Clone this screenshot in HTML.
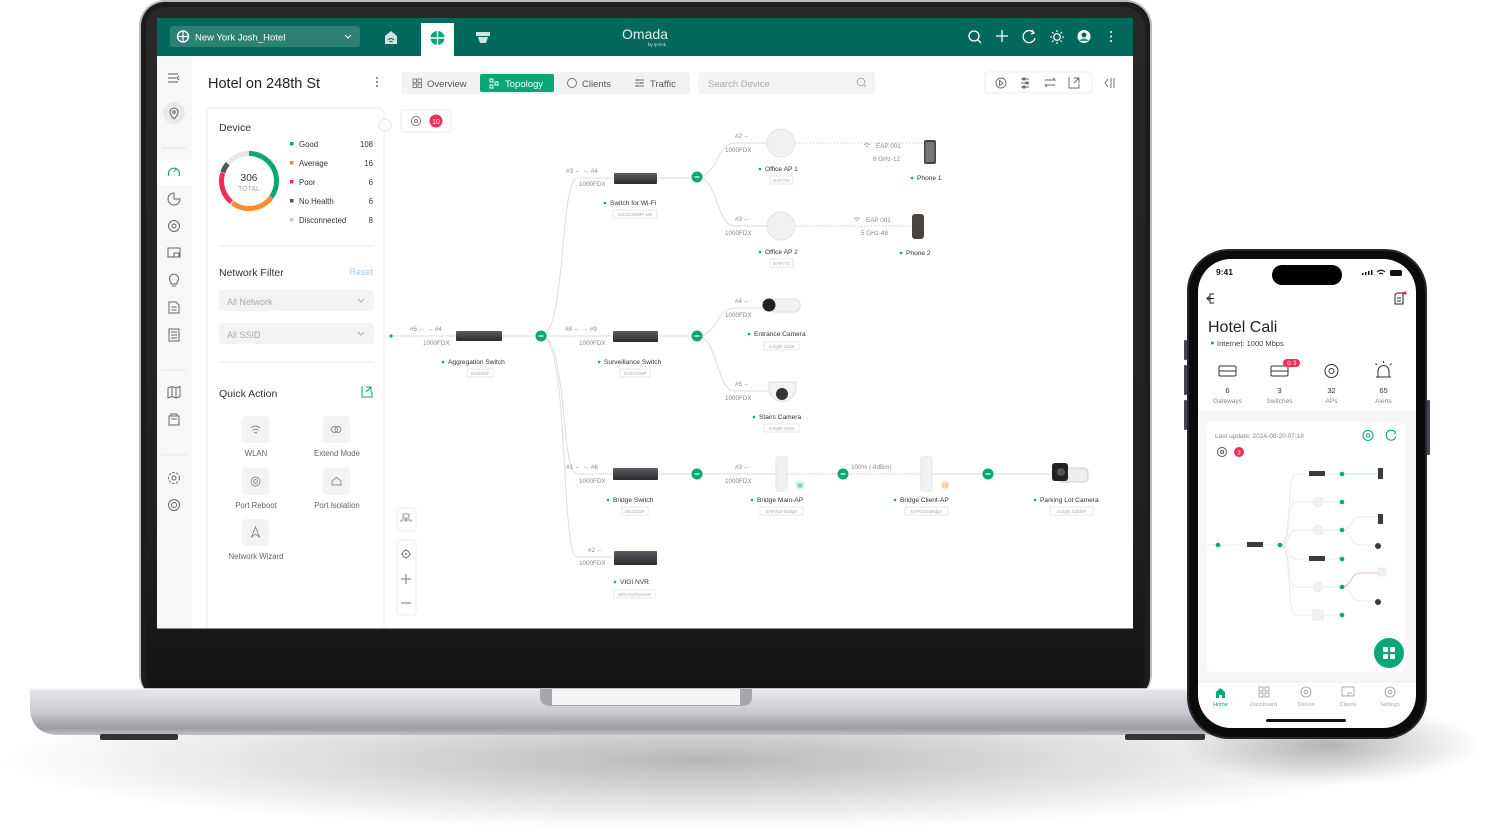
<!DOCTYPE html>
<html><head><meta charset="utf-8">
<style>
html,body{margin:0;padding:0;background:#fff;width:1487px;height:837px;overflow:hidden}
svg{display:block}
text{font-family:"Liberation Sans",sans-serif}
</style></head><body>
<svg width="1487" height="837" viewBox="0 0 1487 837" xmlns="http://www.w3.org/2000/svg">
<defs>
<radialGradient id="shd" cx="50%" cy="50%" r="50%"><stop offset="0" stop-color="#000" stop-opacity=".28"/><stop offset="1" stop-color="#000" stop-opacity="0"/></radialGradient>
<linearGradient id="base" x1="0" y1="0" x2="0" y2="1"><stop offset="0" stop-color="#e6e7e9"/><stop offset=".5" stop-color="#c9cbce"/><stop offset=".85" stop-color="#9a9c9f"/><stop offset="1" stop-color="#c0c2c5"/></linearGradient>
<linearGradient id="chin" x1="0" y1="0" x2="0" y2="1"><stop offset="0" stop-color="#282828"/><stop offset=".7" stop-color="#222"/><stop offset="1" stop-color="#141414"/></linearGradient>
<linearGradient id="sw" x1="0" y1="0" x2="0" y2="1"><stop offset="0" stop-color="#5a5d61"/><stop offset="1" stop-color="#2a2c2e"/></linearGradient>
<clipPath id="scr"><rect x="157" y="18" width="976" height="610"/></clipPath>
</defs>
<!-- shadow -->
<ellipse cx="700" cy="760" rx="700" ry="70" fill="url(#shd)"/>
<ellipse cx="1330" cy="745" rx="150" ry="40" fill="url(#shd)"/>
<!-- laptop lid -->
<rect x="139" y="0" width="1013" height="700" rx="26" fill="#b9bbbe"/>
<rect x="141" y="2" width="1009" height="698" rx="24" fill="#1c1c1c"/>
<rect x="146" y="7" width="999" height="690" rx="20" fill="url(#chin)"/>
<!-- screen -->
<rect x="157" y="18" width="976" height="611" fill="#8a8a8a"/>
<rect x="157" y="18" width="976" height="610" fill="#fff"/>
<rect x="157" y="18" width="976" height="38" fill="#04695c"/>
<!-- header -->
<rect x="170" y="26" width="190" height="21" rx="3" fill="#2d8074"/>
<circle cx="183" cy="36.5" r="5.5" fill="none" stroke="#fff" stroke-width="1.4"/><path d="M177.5 36.5h11M183 31v11" stroke="#fff" stroke-width="1.2"/>
<text x="195" y="40.5" font-size="9.5" fill="#fff">New York Josh_Hotel</text>
<path d="M345 35l3 3 3-3" fill="none" stroke="#fff" stroke-width="1.1"/>
<path d="M385 36l6-5 6 5v8h-12z" fill="#cfe3df"/><path d="M388 40q3-3 6 0M389.5 42q1.5-1.5 3 0" stroke="#04695c" fill="none" stroke-width="1"/>
<path d="M421 23h33v33h-33z" fill="#fff"/>
<circle cx="437.5" cy="38" r="7" fill="#07a776"/><path d="M430.5 38h14M437.5 31v14" stroke="#fff" stroke-width="1.4"/>
<path d="M476 32h14v4h-14zM478 37h10l-2 6h-6z" fill="#cfe3df"/>
<text x="645" y="39" font-size="14" fill="#e5f0ee" text-anchor="middle">Omada</text>
<text x="657" y="46" font-size="4.5" fill="#cfe3df" text-anchor="middle">by tp-link</text>
<circle cx="974" cy="36" r="5" fill="none" stroke="#fff" stroke-width="1.3"/><path d="M978 40l3 3" stroke="#fff" stroke-width="1.3"/>
<path d="M1002 30v12M996 36h12" stroke="#fff" stroke-width="1.3"/>
<path d="M1034 33a6 6 0 1 0 1 5" fill="none" stroke="#fff" stroke-width="1.3"/><path d="M1032 30l2 3-3 1" fill="none" stroke="#fff" stroke-width="1.2"/>
<circle cx="1057" cy="37" r="3.3" fill="none" stroke="#fff" stroke-width="1.2"/><path d="M1057 30v2M1057 42v2M1050 37h2M1062 37h2M1052 32l1.5 1.5M1060.5 40.5l1.5 1.5M1062 32l-1.5 1.5M1052 42l1.5-1.5" stroke="#fff" stroke-width="1.1"/>
<circle cx="1084" cy="36.5" r="6.5" fill="#fff"/><circle cx="1084" cy="35" r="2.5" fill="#04695c"/><path d="M1079 41q5-5 10 0" fill="#07a776"/>
<circle cx="1111" cy="32" r="1" fill="#fff"/><circle cx="1111" cy="36.5" r="1" fill="#fff"/><circle cx="1111" cy="41" r="1" fill="#fff"/>
<!-- sidebar -->
<rect x="157" y="56" width="35" height="572" fill="#f7f7f7"/>
<path d="M168 74h10M168 78h8M168 82h10M179 76l-2 2 2 2" stroke="#555" fill="none" stroke-width="1"/>
<circle cx="174" cy="113" r="11" fill="#e9e9e9"/><path d="M174 119s-4-4-4-7a4 4 0 0 1 8 0c0 3-4 7-4 7z" fill="none" stroke="#666" stroke-width="1"/><circle cx="174" cy="112" r="1.3" fill="none" stroke="#666"/>
<path d="M162 148h25M162 370h25M162 455h25" stroke="#e6e6e6"/>
<rect x="157" y="160" width="35" height="25" fill="#fff"/>
<path d="M169 176a5.5 5.5 0 1 1 10 0" fill="none" stroke="#07a776" stroke-width="1.2"/><path d="M174 172l2-3" stroke="#07a776"/>
<g fill="none" stroke="#666" stroke-width="1">
<path d="M174 193a6 6 0 1 0 6 6h-6z"/><circle cx="174" cy="226" r="5.5"/><circle cx="174" cy="226" r="2"/>
<rect x="168" y="248" width="12" height="9"/><path d="M174 257v-4h5v4"/>
<path d="M171 282a4.5 4.5 0 1 1 6 0v2h-6zM172 286h4"/>
<path d="M169 302h7l3 3v8h-10zM171.5 307h5M171.5 310h5"/>
<rect x="169" y="329" width="10" height="12"/><path d="M171 332h6M171 335h6M171 338h6"/>
<path d="M168 388l4-1.5 4 1.5 4-1.5v10l-4 1.5-4-1.5-4 1.5z M172 387v10M176 388.5v10"/>
<rect x="169" y="416" width="10" height="9"/><path d="M171 416v-2h6v2M171 419h6"/>
<circle cx="174" cy="478" r="2"/><circle cx="174" cy="478" r="5.5" stroke-dasharray="2.5 1.5"/>
<circle cx="174" cy="505" r="5.5"/><circle cx="174" cy="505" r="2.5"/>
</g>
<!-- page title -->
<text x="208" y="88" font-size="14.5" fill="#222">Hotel on 248th St</text>
<circle cx="377" cy="78" r=".9" fill="#444"/><circle cx="377" cy="82" r=".9" fill="#444"/><circle cx="377" cy="86" r=".9" fill="#444"/>
<!-- tabs -->
<rect x="401" y="72" width="289" height="22" rx="3" fill="#f2f2f2"/>
<rect x="480" y="74" width="74" height="18" rx="2" fill="#07a776"/>
<g fill="none" stroke="#777" stroke-width=".9"><rect x="413" y="79" width="3.5" height="3.5"/><rect x="418" y="79" width="3.5" height="3.5"/><rect x="413" y="84" width="3.5" height="3.5"/><rect x="418" y="84" width="3.5" height="3.5"/>
<circle cx="572" cy="83" r="4.5"/><path d="M635 80h9M635 83h9M635 86h9M638 79v2M641 82v2M637 85v2"/></g>
<path d="M490 79h3v3h-3zM490 85h3v3h-3zM495 82h3v3h-3z" fill="none" stroke="#fff" stroke-width=".9"/>
<text x="427" y="87" font-size="9.5" fill="#555">Overview</text>
<text x="505" y="87" font-size="9.5" fill="#fff">Topology</text>
<text x="582" y="87" font-size="9.5" fill="#555">Clients</text>
<text x="650" y="87" font-size="9.5" fill="#555">Traffic</text>
<rect x="698" y="72" width="177" height="22" rx="3" fill="#f4f4f4"/>
<text x="708" y="87" font-size="9.5" fill="#aaa">Search Device</text>
<circle cx="861" cy="82" r="3.8" fill="none" stroke="#aaa"/><path d="M864 85l2 2" stroke="#aaa"/>
<rect x="985" y="72" width="107" height="21" rx="3" fill="#fff" stroke="#ececec"/>
<g fill="none" stroke="#666" stroke-width=".9"><circle cx="1001" cy="83" r="5"/><path d="M999.5 80.5v5l3.5-2.5z"/>
<path d="M1021 79h8M1021 83h8M1021 87h8"/><rect x="1023" y="78" width="2" height="2"/><rect x="1026" y="82" width="2" height="2"/><rect x="1023" y="86" width="2" height="2"/>
<path d="M1045 80h10l-2-2M1055 85h-10l2 2"/><path d="M1070 78h-1v10h10v-4M1074 78h5v5M1079 78l-5 5"/>
<path d="M1108 79l-3 4 3 4M1111 78v10M1114 78v10"/></g>
<!-- left card -->
<g clip-path="url(#scr)">
<rect x="207" y="108" width="177" height="540" rx="5" fill="#fff" stroke="#ececec"/>
</g>
<circle cx="385" cy="125" r="6" fill="#fff" stroke="#e5e5e5"/>
<text x="219" y="131" font-size="10.5" fill="#333">Device</text>
<g fill="none" stroke-width="5">
<circle cx="249" cy="181" r="27.5" stroke="#e7e7e7"/>
<circle cx="249" cy="181" r="27.5" stroke="#07a776" stroke-dasharray="60 200" transform="rotate(-90 249 181)"/>
<circle cx="249" cy="181" r="27.5" stroke="#ff8b2a" stroke-dasharray="44 200" transform="rotate(35 249 181)"/>
<circle cx="249" cy="181" r="27.5" stroke="#ef2d56" stroke-dasharray="32 200" transform="rotate(130 249 181)"/>
<circle cx="249" cy="181" r="27.5" stroke="#555" stroke-dasharray="10 200" transform="rotate(198 249 181)"/>
</g>
<text x="249" y="181" font-size="10" fill="#333" text-anchor="middle">306</text>
<text x="249" y="191" font-size="7" fill="#aaa" text-anchor="middle">TOTAL</text>
<g font-size="7.8" fill="#333">
<rect x="290" y="142" width="3.5" height="3.5" fill="#07a776"/><text x="299" y="147">Good</text><text x="373" y="147" text-anchor="end">108</text>
<rect x="290" y="161" width="3.5" height="3.5" fill="#ff8b2a"/><text x="299" y="166">Average</text><text x="373" y="166" text-anchor="end">16</text>
<rect x="290" y="180" width="3.5" height="3.5" fill="#ef2d56"/><text x="299" y="185">Poor</text><text x="373" y="185" text-anchor="end">6</text>
<rect x="290" y="199" width="3.5" height="3.5" fill="#555"/><text x="299" y="204">No Health</text><text x="373" y="204" text-anchor="end">6</text>
<rect x="290" y="218" width="3.5" height="3.5" fill="#ccc"/><text x="299" y="223">Disconnected</text><text x="373" y="223" text-anchor="end">8</text>
</g>
<path d="M219 246h155M219 362h155" stroke="#eee"/>
<text x="219" y="276" font-size="10.5" fill="#333">Network Filter</text>
<text x="373" y="275" font-size="9" fill="#a8c8f0" text-anchor="end">Reset</text>
<rect x="219" y="290" width="155" height="21" rx="3" fill="#f3f3f3"/><text x="227" y="305" font-size="9" fill="#aaa">All  Network</text><path d="M358 299l3 3 3-3" fill="none" stroke="#aaa"/>
<rect x="219" y="323" width="155" height="21" rx="3" fill="#f3f3f3"/><text x="227" y="338" font-size="9" fill="#aaa">All SSID</text><path d="M358 332l3 3 3-3" fill="none" stroke="#aaa"/>
<text x="219" y="397" font-size="10.5" fill="#333">Quick Action</text>
<path d="M363 387h-1v10h10v-5M366 387h5v5M371 387l-5 5" fill="none" stroke="#07a776" stroke-width="1.1"/>
<g fill="#f3f3f3"><rect x="242" y="416" width="27" height="27" rx="4"/><rect x="323" y="416" width="27" height="27" rx="4"/><rect x="242" y="468" width="27" height="27" rx="4"/><rect x="323" y="468" width="27" height="27" rx="4"/><rect x="242" y="519" width="27" height="27" rx="4"/></g>
<g fill="none" stroke="#888" stroke-width=".9"><path d="M251 428q4.5-4 9 0M252.5 430.5q3-2.5 6 0M254 433q1.5-1 3 0"/><circle cx="334.5" cy="429.5" r="3"/><circle cx="338" cy="429.5" r="3"/><circle cx="255.5" cy="481.5" r="4.5"/><circle cx="255.5" cy="481.5" r="2"/><path d="M332 485v-4l4.5-3.5 4.5 3.5v4z"/><path d="M255.5 527l-4 10 4-3 4 3z"/></g>
<g font-size="7.8" fill="#666" text-anchor="middle"><text x="256" y="456">WLAN</text><text x="337" y="456">Extend Mode</text><text x="256" y="508">Port Reboot</text><text x="337" y="508">Port Isolation</text><text x="256" y="559">Network Wizard</text></g>
<!-- topology top-left badge -->
<rect x="401" y="110" width="50" height="22" rx="3" fill="#fff" stroke="#eee"/>
<circle cx="416" cy="121" r="4.5" fill="none" stroke="#777"/><circle cx="416" cy="121" r="1.5" fill="none" stroke="#777"/>
<circle cx="436" cy="121" r="6.5" fill="#ef2d56"/><text x="436" y="124" font-size="7" fill="#fff" text-anchor="middle">10</text>
<!-- left controls -->
<rect x="397" y="508" width="19" height="23" rx="3" fill="#fff" stroke="#eee"/>
<path d="M403 514h6v4h-6zM406 518v2M401 520h10M401 520v2M406 520v2M411 520v2" fill="none" stroke="#777" stroke-width=".8"/>
<rect x="397" y="540" width="19" height="75" rx="3" fill="#fff" stroke="#eee"/>
<circle cx="406" cy="554" r="3.5" fill="none" stroke="#777"/><circle cx="406" cy="554" r="1" fill="#777"/><path d="M406 549v1.5M406 557.5v1.5M401 554h1.5M409.5 554h1.5M401 579h10M406 574v10M401 603h10" stroke="#777" fill="none"/>
<!-- topology lines -->
<g fill="none" stroke="#ddd" stroke-width="1">
<path d="M391 336H541"/>
<path d="M541 336C566 336 560 178 577 178H697M541 336H697M541 336C568 336 560 474 577 474H697M541 336C570 336 560 557 577 557H612"/>
<path d="M697 177C718 177 716 143 735 143H768M697 177C718 177 716 226 735 226H768"/>
<path d="M697 336C718 336 716 308 735 308H762M697 336C718 336 716 391 735 391H768"/>
<path d="M697 474H776M932 474H1052"/>
</g>
<path d="M795 143H922M795 226H912M787 474H921" stroke="#ccc" stroke-dasharray="1.5 1.5" fill="none"/>
<circle cx="391" cy="336" r="1.6" fill="#07a776"/>
<g fill="#07a776"><circle cx="541" cy="336" r="5.5"/><circle cx="697" cy="177" r="5.5"/><circle cx="697" cy="336" r="5.5"/><circle cx="697" cy="474" r="5.5"/><circle cx="843" cy="474" r="5.5"/><circle cx="988" cy="474" r="5.5"/></g>
<g stroke="#fff" stroke-width="1.2"><path d="M538.5 336h5M694.5 177h5M694.5 336h5M694.5 474h5M840.5 474h5M985.5 474h5"/></g>
<!-- devices -->
<g fill="url(#sw)"><rect x="456" y="331" width="46" height="10" rx="1"/><rect x="614" y="173" width="43" height="11" rx="1"/><rect x="613" y="331" width="45" height="11" rx="1"/><rect x="613" y="468" width="45" height="12" rx="1"/><rect x="614" y="551" width="43" height="14" rx="1"/></g>
<g fill="#f0f1f3" stroke="#e3e4e6"><circle cx="781" cy="143" r="14"/><circle cx="781" cy="226" r="14"/><rect x="776" y="457" width="11" height="34" rx="2"/><rect x="921" y="457" width="11" height="34" rx="2"/></g>
<rect x="924" y="140" width="12" height="24" rx="2" fill="#444"/><rect x="925.5" y="142" width="9" height="20" fill="#777"/>
<rect x="912" y="214" width="12" height="25" rx="3" fill="#4a4440"/>
<rect x="770" y="299" width="30" height="13" rx="5" fill="#f2f2f2" stroke="#ddd"/><circle cx="769" cy="305" r="6.5" fill="#222"/>
<path d="M769 382h27v6a13 13 0 0 1-27 0z" fill="#f3f3f3" stroke="#ddd"/><circle cx="782" cy="394" r="6" fill="#333"/>
<rect x="1058" y="468" width="30" height="14" rx="4" fill="#eee" stroke="#ccc"/><rect x="1052" y="463" width="16" height="18" rx="3" fill="#222"/><circle cx="1061" cy="472" r="4" fill="#555"/>
<circle cx="800" cy="485" r="4.5" fill="#d4f2e6"/><text x="800" y="487.5" font-size="5" fill="#07a776" text-anchor="middle">W</text>
<circle cx="945" cy="485" r="4.5" fill="#ffe8d2"/><text x="945" y="487.5" font-size="5" fill="#ff8b2a" text-anchor="middle">10</text>
<!-- topology labels -->
<g font-size="6.3" fill="#888">
<text x="410" y="331">#5 ←   → #4</text><text x="423" y="345">1000FDX</text>
<text x="566" y="173">#3 ←   → #4</text><text x="579" y="186">1000FDX</text>
<text x="565" y="331">#8 ←   → #9</text><text x="579" y="345">1000FDX</text>
<text x="566" y="469">#1 ←   → #6</text><text x="579" y="483">1000FDX</text>
<text x="588" y="552">#2 ←</text><text x="579" y="565">1000FDX</text>
<text x="735" y="138">#2 ←</text><text x="725" y="152">1000FDX</text>
<text x="735" y="221">#3 ←</text><text x="725" y="235">1000FDX</text>
<text x="735" y="303">#4 ←</text><text x="725" y="317">1000FDX</text>
<text x="735" y="386">#5 ←</text><text x="725" y="400">1000FDX</text>
<text x="735" y="469">#3 ←</text><text x="725" y="483">1000FDX</text>
<text x="876" y="148">EAP 001</text><text x="873" y="161">6 GHz-12</text>
<text x="866" y="222">EAP 001</text><text x="861" y="235">5 GHz-48</text>
<text x="851" y="469">100% (-8dBm)</text>
</g>
<path d="M864 145q3-2.5 6 0M865.5 146.5q1.5-1 3 0M854 219q3-2.5 6 0M855.5 220.5q1.5-1 3 0" stroke="#888" fill="none" stroke-width=".7"/>
<g font-size="6.6" fill="#333">
<text x="448" y="364">Aggregation Switch</text><text x="610" y="205">Switch for Wi-Fi</text><text x="604" y="364">Surveillance Switch</text><text x="613" y="502">Bridge Switch</text><text x="620" y="584">VIGI NVR</text>
<text x="765" y="171">Office AP 1</text><text x="765" y="254">Office AP 2</text><text x="754" y="336">Entrance Camera</text><text x="759" y="419">Stairs Camera</text><text x="757" y="502">Bridge Main-AP</text><text x="900" y="502">Bridge Client-AP</text><text x="1040" y="502">Parking Lot Camera</text>
<text x="917" y="180">Phone 1</text><text x="906" y="255">Phone 2</text>
</g>
<g fill="#07a776"><circle cx="443" cy="362" r="1.3"/><circle cx="605" cy="203" r="1.3"/><circle cx="599" cy="362" r="1.3"/><circle cx="608" cy="500" r="1.3"/><circle cx="615" cy="582" r="1.3"/><circle cx="760" cy="169" r="1.3"/><circle cx="760" cy="252" r="1.3"/><circle cx="749" cy="334" r="1.3"/><circle cx="754" cy="417" r="1.3"/><circle cx="752" cy="500" r="1.3"/><circle cx="895" cy="500" r="1.3"/><circle cx="1035" cy="500" r="1.3"/><circle cx="912" cy="178" r="1.3"/><circle cx="901" cy="253" r="1.3"/></g>
<g fill="#fff" stroke="#ddd" stroke-width=".7"><rect x="467" y="369" width="26" height="8"/><rect x="613" y="210" width="44" height="8"/><rect x="620" y="369" width="30" height="8"/><rect x="622" y="507" width="26" height="8"/><rect x="614" y="590" width="41" height="8"/><rect x="770" y="176" width="23" height="8"/><rect x="770" y="259" width="23" height="8"/><rect x="764" y="342" width="35" height="8"/><rect x="764" y="424" width="35" height="8"/><rect x="760" y="507" width="43" height="8"/><rect x="905" y="507" width="43" height="8"/><rect x="1050" y="507" width="43" height="8"/></g>
<g font-size="4.5" fill="#aaa" text-anchor="middle"><text x="480" y="375">SX3008F</text><text x="635" y="216">SG2210XMP-M2</text><text x="635" y="375">SG2210MP</text><text x="635" y="513">SG2210P</text><text x="634.5" y="596">VIGI NVR1016H</text><text x="781.5" y="182">EAP772</text><text x="781.5" y="265">EAP772</text><text x="781.5" y="348">InSight S345</text><text x="781.5" y="430">InSight S445</text><text x="781.5" y="513">EAP215-Bridge</text><text x="926.5" y="513">EAP215-Bridge</text><text x="1071.5" y="513">InSight S385PI</text></g>
<!-- laptop base -->
<path d="M30 689H1250V735H60Q32 735 30 710Z" fill="url(#base)"/>
<path d="M30 689H1250" stroke="#f3f3f3" stroke-width="1.5"/>
<path d="M540 689h212v8q0 9-12 9H552q-12 0-12-9z" fill="#a4a6a9"/>
<rect x="552" y="689" width="188" height="16" fill="#f3f4f6"/>
<rect x="100" y="734" width="78" height="6" rx="2" fill="#333"/><rect x="1125" y="734" width="80" height="6" rx="2" fill="#333"/>
<!-- phone -->
<rect x="1187" y="249" width="240" height="490" rx="42" fill="#2b2430"/>
<rect x="1189" y="251" width="236" height="486" rx="40" fill="#0b0b0b"/>
<rect x="1198" y="259" width="218" height="469" rx="33" fill="#fff"/>
<rect x="1184" y="340" width="3" height="20" rx="1" fill="#4a4350"/><rect x="1184" y="365" width="3" height="30" rx="1" fill="#4a4350"/><rect x="1184" y="400" width="3" height="30" rx="1" fill="#4a4350"/><rect x="1427" y="400" width="3" height="55" rx="1" fill="#4a4350"/>
<rect x="1272" y="265" width="70" height="20" rx="10" fill="#000"/>
<text x="1216" y="275" font-size="8.5" font-weight="bold" fill="#111">9:41</text>
<path d="M1362 275h1.5v-2h-1.5zM1365 275h1.5v-3h-1.5zM1368 275h1.5v-4h-1.5zM1371 275h1.5v-5h-1.5z" fill="#111"/>
<path d="M1377 272q4-3.5 8 0M1379 274q2-1.5 4 0" stroke="#111" fill="none" stroke-width="1.1"/>
<rect x="1390" y="270" width="12" height="6" rx="1.5" fill="#111"/>
<path d="M1214 294h-4v9h4M1207 298.5h7M1209 296.5l-2 2 2 2" fill="none" stroke="#222" stroke-width="1"/>
<path d="M1397 293h6v11h-8v-9zM1397 298h4M1397 301h4" fill="none" stroke="#222" stroke-width="1"/><circle cx="1405" cy="293" r="1.6" fill="#ef2d56"/>
<text x="1208" y="332" font-size="16" fill="#222">Hotel Cali</text>
<circle cx="1212.5" cy="343" r="1.5" fill="#07a776"/><text x="1217" y="346" font-size="7.5" fill="#444">Internet: 1000 Mbps</text>
<g fill="none" stroke="#333" stroke-width="1"><rect x="1219" y="366" width="17" height="10" rx="1.5"/><path d="M1219 371h17"/><rect x="1271" y="366" width="17" height="10" rx="1.5"/><path d="M1271 371h17"/><circle cx="1331.5" cy="371" r="6.5"/><circle cx="1331.5" cy="371" r="2.5"/><path d="M1378 377v-6a5.5 5.5 0 0 1 11 0v6zM1376 377h15M1383.5 363v-2M1377 365l-1.5-1.5M1390 365l1.5-1.5"/></g>
<rect x="1283" y="359" width="17" height="8" rx="4" fill="#ef2d56"/><text x="1291.5" y="365" font-size="6" fill="#fff" text-anchor="middle">⊙ 3</text>
<g font-size="7.5" fill="#333" text-anchor="middle"><text x="1227.5" y="393">6</text><text x="1279.5" y="393">3</text><text x="1331.5" y="393">32</text><text x="1383.5" y="393">65</text></g>
<g font-size="6.5" fill="#888" text-anchor="middle"><text x="1227.5" y="403">Gateways</text><text x="1279.5" y="403">Switches</text><text x="1331.5" y="403">APs</text><text x="1383.5" y="403">Alerts</text></g>
<rect x="1198" y="410" width="218" height="272" fill="#f6f6f6"/>
<rect x="1207" y="422" width="198" height="250" rx="6" fill="#fff"/>
<text x="1215" y="438" font-size="6.5" fill="#888">Last update: 2024-08-20 07:18</text>
<circle cx="1368" cy="435.5" r="5" fill="none" stroke="#07a776" stroke-width="1.1"/><circle cx="1368" cy="435.5" r="1.8" fill="none" stroke="#07a776"/>
<path d="M1395 432a5 5 0 1 0 1 4.5" fill="none" stroke="#07a776" stroke-width="1.1"/><path d="M1393 430.5l2.5 1.5-1 2.5" fill="none" stroke="#07a776"/>
<circle cx="1222" cy="452" r="4.5" fill="none" stroke="#555"/><circle cx="1222" cy="452" r="1.5" fill="none" stroke="#555"/>
<circle cx="1239" cy="452" r="5" fill="#ef2d56"/><text x="1239" y="454.5" font-size="6" fill="#fff" text-anchor="middle">3</text>
<g fill="none" stroke="#e3e3e3" stroke-width=".7">
<path d="M1207 545H1280M1280 545C1292 545 1286 474 1296 474H1342M1280 545C1292 545 1286 502 1296 502H1342M1280 545C1292 545 1286 530 1296 530H1342M1280 545C1292 545 1286 559 1296 559H1342M1280 545C1292 545 1286 587 1296 587H1342M1280 545C1292 545 1286 615 1296 615H1342"/>
<path d="M1342 530C1352 530 1350 517 1360 517H1378M1342 530C1352 530 1350 545 1360 545H1378M1342 587C1352 587 1350 601 1360 601H1378"/>
</g>
<path d="M1342 474H1378" stroke="#bfe9d9"/><path d="M1342 587C1352 587 1350 573 1360 573H1378" stroke="#f5a0b0" fill="none" stroke-width=".7"/>
<g fill="#07a776"><circle cx="1218" cy="545" r="2.3"/><circle cx="1280" cy="545" r="2.3"/><circle cx="1342" cy="474" r="2.3"/><circle cx="1342" cy="502" r="2.3"/><circle cx="1342" cy="530" r="2.3"/><circle cx="1342" cy="559" r="2.3"/><circle cx="1342" cy="587" r="2.3"/><circle cx="1342" cy="615" r="2.3"/></g>
<g fill="#3a3c3e"><rect x="1247" y="542" width="16" height="5"/><rect x="1309" y="471" width="16" height="5"/><rect x="1309" y="556" width="16" height="5"/><rect x="1378" y="468" width="5" height="11"/><rect x="1378" y="514" width="5" height="10"/><circle cx="1378" cy="546" r="3"/><circle cx="1378" cy="602" r="3"/></g>
<g fill="#f0f1f3" stroke="#e0e0e0" stroke-width=".5"><circle cx="1318" cy="502" r="5"/><circle cx="1318" cy="530" r="5"/><circle cx="1318" cy="587" r="5"/><rect x="1313" y="610" width="10" height="10"/><rect x="1378" y="568" width="8" height="8"/></g>
<!-- fab -->
<circle cx="1389" cy="653" r="15" fill="#07a776"/>
<g fill="#fff"><rect x="1383" y="647" width="5" height="5" rx="1"/><rect x="1390" y="647" width="5" height="5" rx="1"/><rect x="1383" y="654" width="5" height="5" rx="1"/><rect x="1390" y="654" width="5" height="5" rx="1"/></g>
<!-- tab bar -->
<path d="M1198 682H1416" stroke="#eee"/>
<path d="M1216 698v-6l4.5-4 4.5 4v6h-3v-3h-3v3z" fill="#07a776"/>
<g fill="none" stroke="#999" stroke-width=".8"><rect x="1259" y="687" width="4" height="4"/><rect x="1265" y="687" width="4" height="4"/><rect x="1259" y="693" width="4" height="4"/><rect x="1265" y="693" width="4" height="4"/><circle cx="1306" cy="692" r="5"/><circle cx="1306" cy="692" r="1.8"/><rect x="1342" y="687" width="12" height="9"/><path d="M1348 696v-3h4"/><circle cx="1390" cy="692" r="5"/><circle cx="1390" cy="692" r="1.8"/></g>
<g font-size="5.5" text-anchor="middle" fill="#aaa"><text x="1220.5" y="706" fill="#07a776">Home</text><text x="1263.5" y="706">Dashboard</text><text x="1306" y="706">Device</text><text x="1348" y="706">Clients</text><text x="1390" y="706">Settings</text></g>
<rect x="1266" y="719" width="80" height="3" rx="1.5" fill="#111"/>
</svg>
</body></html>
